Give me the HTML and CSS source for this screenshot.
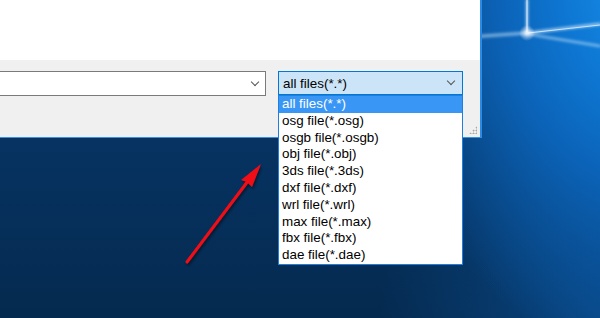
FILE: index.html
```html
<!DOCTYPE html>
<html lang="en">
<head>
    <meta charset="UTF-8">
    <meta name="viewport" content="width=device-width, initial-scale=1.0">
    <title>File Type Filter</title>
    <link rel="stylesheet" href="styles.css">
</head>
<body>
    <div class="desktop">
        <!-- Wallpaper light beams -->
        <svg class="beams" width="140" height="80" viewBox="460 0 140 80">
            <defs>
                <filter id="glow" x="-50%" y="-50%" width="200%" height="200%">
                    <feGaussianBlur stdDeviation="1.8"/>
                </filter>
                <radialGradient id="spot">
                    <stop offset="0" stop-color="#ffffff" stop-opacity="0.85"/>
                    <stop offset="1" stop-color="#ffffff" stop-opacity="0"/>
                </radialGradient>
            </defs>
            <g filter="url(#glow)" stroke="#cfeaff" stroke-linecap="round" fill="none">
                <line x1="527" y1="0" x2="527" y2="33" stroke-width="2"/>
                <line x1="470" y1="37" x2="527" y2="33" stroke-width="3" stroke-opacity="0.6"/>
                <line x1="527" y1="33" x2="600" y2="24" stroke-width="2.4" stroke-opacity="0.8"/>
                <line x1="527" y1="34" x2="600" y2="46" stroke-width="2" stroke-opacity="0.7"/>
            </g>
            <g stroke="#ffffff" stroke-opacity="0.85" fill="none">
                <line x1="527" y1="0" x2="527" y2="32" stroke-width="1"/>
                <line x1="528" y1="33" x2="600" y2="25" stroke-width="0.8"/>
            </g>
            <circle cx="527" cy="33" r="8" fill="url(#spot)"/>
        </svg>

        <div class="window">
            <div class="window-body"></div>
            <div class="toolbar">
                <div class="combo path-combo">
                    <span class="chevron"></span>
                </div>
                <div class="combo filter-combo">
                    <span class="combo-text">all files(*.*)</span>
                    <span class="chevron"></span>
                    <ul class="dropdown">
                        <li class="selected">all files(*.*)</li>
                        <li>osg file(*.osg)</li>
                        <li>osgb file(*.osgb)</li>
                        <li>obj file(*.obj)</li>
                        <li>3ds file(*.3ds)</li>
                        <li>dxf file(*.dxf)</li>
                        <li>wrl file(*.wrl)</li>
                        <li>max file(*.max)</li>
                        <li>fbx file(*.fbx)</li>
                        <li>dae file(*.dae)</li>
                    </ul>
                </div>
                <span class="grip"></span>
            </div>
        </div>

        <!-- Red annotation arrow -->
        <svg class="arrow" width="600" height="318" viewBox="0 0 600 318">
            <defs>
                <filter id="shadow" x="-20%" y="-20%" width="140%" height="140%">
                    <feDropShadow dx="1" dy="2" stdDeviation="1.5" flood-color="#000" flood-opacity="0.55"/>
                </filter>
            </defs>
            <g filter="url(#shadow)">
                <line x1="187" y1="262" x2="248" y2="181" stroke="#f01018" stroke-width="3" stroke-linecap="round"/>
                <polygon points="261,164 252,187 247,182 241,180" fill="#f01018"/>
            </g>
        </svg>
    </div>
</body>
</html>
```

FILE: styles.css
```css
* {
    box-sizing: border-box;
}
html, body {
    margin: 0;
    padding: 0;
}
body {
    font-family: "Liberation Sans", Arial, sans-serif;
    font-size: 13.4px;
    color: #000;
}
.desktop {
    position: relative;
    width: 600px;
    height: 318px;
    overflow: hidden;
    background-color: #073360;
    background-image:
        radial-gradient(ellipse 280px 380px at 650px -20px, #1a92ec 0%, #0e78d4 30%, #0b62b6 55%, rgba(10, 80, 150, 0) 100%),
        radial-gradient(ellipse 220px 220px at 600px 318px, rgba(10, 80, 150, 0.7) 0%, rgba(10, 80, 150, 0) 100%),
        linear-gradient(180deg, #083c6e 0%, #063260 50%, #052a4f 100%);
}
.beams {
    position: absolute;
    top: 0;
    right: 0;
}
.window {
    position: relative;
    width: 482px;
    border-right: 2px solid #2a8ae4;
    border-bottom: 1px solid #3a90e0;
}
.window-body {
    height: 60px;
    background: #ffffff;
}
.toolbar {
    position: relative;
    display: flex;
    align-items: flex-start;
    gap: 12px;
    height: 77px;
    padding-top: 11px;
    background: #f0f0f0;
}
.combo {
    position: relative;
    display: flex;
    align-items: center;
}
.path-combo {
    width: 266px;
    height: 25px;
    background: #ffffff;
    border: 1px solid #7a7a7a;
    border-left: none;
}
.filter-combo {
    width: 185px;
    height: 24px;
    padding-left: 4px;
    background: #cce4f7;
    border: 1px solid #0078d7;
}
.combo-text {
    flex: 1;
}
.chevron {
    position: absolute;
    right: 8px;
    top: 50%;
    width: 6px;
    height: 6px;
    margin-top: -5px;
    border-right: 1.3px solid #555;
    border-bottom: 1.3px solid #555;
    transform: rotate(45deg);
}
.path-combo .chevron {
    right: 7px;
}
.dropdown {
    position: absolute;
    top: 23px;
    left: -1px;
    width: 185px;
    margin: 0;
    padding: 0;
    list-style: none;
    background: #ffffff;
    border: 1px solid #1e7fdc;
    z-index: 2;
}
.dropdown li {
    height: 16.8px;
    line-height: 16.8px;
    padding-left: 3px;
    white-space: nowrap;
}
.dropdown li.selected {
    background: #3a96f4;
    color: #ffffff;
}
.grip {
    position: absolute;
    right: 3px;
    bottom: 3px;
    width: 8px;
    height: 8px;
    background-image:
        radial-gradient(circle, #a8a8a8 0.9px, transparent 1.1px);
    background-size: 3px 3px;
    clip-path: polygon(100% 0, 100% 100%, 0 100%);
}
.arrow {
    position: absolute;
    top: 0;
    left: 0;
    pointer-events: none;
    z-index: 3;
}
```
